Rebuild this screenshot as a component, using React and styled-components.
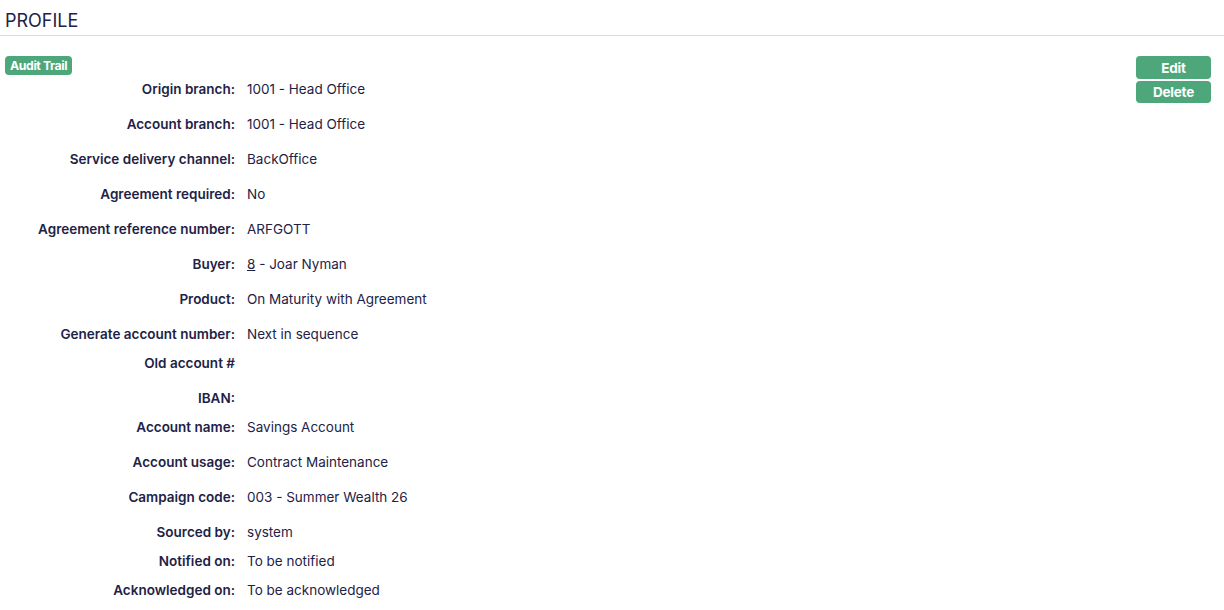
import React from "react";
import styled, { createGlobalStyle } from "styled-components";

const GlobalStyle = createGlobalStyle`
  html, body {
    margin: 0;
    padding: 0;
    background: #ffffff;
  }
  body {
    font-family: Inter, "Noto Sans", "Liberation Sans", sans-serif;
    color: #1e2246;
  }
`;

const Page = styled.div`
  width: 1224px;
`;

const Header = styled.div`
  height: 36px;
  border-bottom: 1px solid #dcdcdc;
  display: flex;
  align-items: center;
  padding: 0 5px;
  box-sizing: border-box;
`;

const Title = styled.h1`
  margin: 0;
  font-size: 18px;
  font-weight: 400;
  color: #1e2246;
  padding-top: 6px;
`;

const Body = styled.div`
  display: flex;
  justify-content: space-between;
  align-items: flex-start;
  padding: 20px 13px 0 5px;
`;

const Left = styled.div`
  display: flex;
  flex-direction: column;
  align-items: flex-start;
`;

const Badge = styled.span`
  display: inline-flex;
  align-items: center;
  height: 19px;
  padding: 0 5px;
  border-radius: 4px;
  background: #4da77a;
  color: #ffffff;
  font-size: 12.3px;
  font-weight: 700;
  letter-spacing: -0.4px;
  margin-bottom: 4px;
`;

const Rows = styled.div`
  display: flex;
  flex-direction: column;
`;

const Row = styled.div`
  display: flex;
  align-items: center;
  height: 20px;
  margin-bottom: ${(p) => (p.$tight ? "9px" : "15px")};
  font-size: 13.5px;
  line-height: 20px;
`;

const Label = styled.div`
  width: 230px;
  text-align: right;
  font-weight: 600;
  color: #1e2246;
`;

const Value = styled.div`
  padding-left: 12px;
  color: #1e2246;
`;

const Link = styled.a`
  color: #1e2246;
  text-decoration: underline;
  cursor: pointer;
`;

const Actions = styled.div`
  display: flex;
  flex-direction: column;
  gap: 2px;
`;

const Button = styled.button`
  width: 75px;
  height: ${(p) => p.$h || 23}px;
  border: none;
  border-radius: 4px;
  background: #4da77a;
  color: #ffffff;
  font-family: Inter, "Noto Sans", "Liberation Sans", sans-serif;
  font-size: 13.5px;
  font-weight: 700;
  letter-spacing: -0.2px;
  padding: 0;
  cursor: pointer;
`;

const rows = [
  { label: "Origin branch:", value: "1001 - Head Office" },
  { label: "Account branch:", value: "1001 - Head Office" },
  { label: "Service delivery channel:", value: "BackOffice" },
  { label: "Agreement required:", value: "No" },
  { label: "Agreement reference number:", value: "ARFGOTT" },
  { label: "Buyer:", value: "buyer" },
  { label: "Product:", value: "On Maturity with Agreement" },
  { label: "Generate account number:", value: "Next in sequence", tight: true },
  { label: "Old account #", value: "" },
  { label: "IBAN:", value: "", tight: true },
  { label: "Account name:", value: "Savings Account" },
  { label: "Account usage:", value: "Contract Maintenance" },
  { label: "Campaign code:", value: "003 - Summer Wealth 26" },
  { label: "Sourced by:", value: "system", tight: true },
  { label: "Notified on:", value: "To be notified", tight: true },
  { label: "Acknowledged on:", value: "To be acknowledged", tight: true },
];

export default function App() {
  return (
    <Page>
      <GlobalStyle />
      <Header>
        <Title>PROFILE</Title>
      </Header>
      <Body>
        <Left>
          <Badge>Audit Trail</Badge>
          <Rows>
            {rows.map((r) => (
              <Row key={r.label} $tight={r.tight}>
                <Label>{r.label}</Label>
                <Value>
                  {r.value === "buyer" ? (
                    <>
                      <Link>8</Link> - Joar Nyman
                    </>
                  ) : (
                    r.value
                  )}
                </Value>
              </Row>
            ))}
          </Rows>
        </Left>
        <Actions>
          <Button>Edit</Button>
          <Button $h={22}>Delete</Button>
        </Actions>
      </Body>
    </Page>
  );
}
